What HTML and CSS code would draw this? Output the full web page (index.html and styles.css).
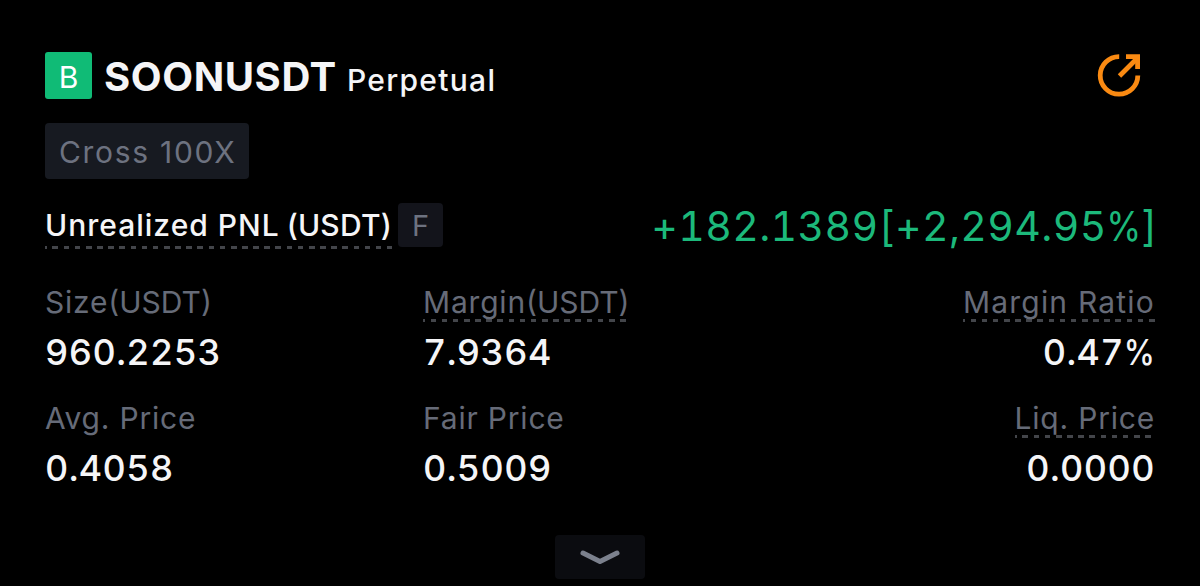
FILE: index.html
```html
<!DOCTYPE html>
<html lang="en">
<head>
    <meta charset="UTF-8">
    <meta name="viewport" content="width=device-width, initial-scale=1.0">
    <title>SOONUSDT Perpetual</title>
    <link rel="stylesheet" href="styles.css">
</head>
<body>
    <div class="position-card">
        <!-- Header -->
        <div class="card-header">
            <span class="side-badge">B</span>
            <h1 class="symbol">SOONUSDT</h1>
            <span class="contract-type">Perpetual</span>
            <svg class="share-icon" width="48" height="48" viewBox="0 0 48 48" fill="none" stroke="#fa8a12" stroke-width="4.8">
                <path d="M24.2 5.6A18.8 18.8 0 1 0 42.8 24.5"/>
                <path d="M24.5 25L42 7.5"/>
                <path d="M31 5.6H42.6V18"/>
            </svg>
        </div>

        <span class="leverage-tag">Cross 100X</span>

        <!-- PNL -->
        <div class="pnl-row">
            <span class="pnl-label dashed">Unrealized PNL <span class="unit">(USDT)</span></span>
            <span class="fair-badge">F</span>
            <span class="pnl-value">+182.1389[+2,294.95<span class="percent">%</span>]</span>
        </div>

        <!-- Position details -->
        <div class="stats">
            <div class="stat">
                <span class="stat-label">Size<span class="unit">(USDT)</span></span>
                <span class="stat-value">960.2253</span>
            </div>
            <div class="stat">
                <span class="stat-label dashed">Margin<span class="unit">(USDT)</span></span>
                <span class="stat-value">7.9364</span>
            </div>
            <div class="stat right">
                <span class="stat-label ratio dashed">Margin Ratio</span>
                <span class="stat-value">0.47<span class="percent">%</span></span>
            </div>
            <div class="stat">
                <span class="stat-label">Avg. Price</span>
                <span class="stat-value">0.4058</span>
            </div>
            <div class="stat">
                <span class="stat-label">Fair Price</span>
                <span class="stat-value">0.5009</span>
            </div>
            <div class="stat right">
                <span class="stat-label dashed">Liq. Price</span>
                <span class="stat-value">0.0000</span>
            </div>
        </div>

        <button class="expand-btn" aria-label="Expand">
            <svg width="42" height="18" viewBox="0 0 42 18" fill="none" stroke="#7c818d" stroke-width="5" stroke-linecap="round" stroke-linejoin="round">
                <path d="M4 5L21 13.5L38 5"/>
            </svg>
        </button>
    </div>
</body>
</html>
```

FILE: styles.css
```css
* {
    margin: 0;
    padding: 0;
    box-sizing: border-box;
}

body {
    font-family: Inter, sans-serif;
    background: #000;
    color: #f5f5f7;
}

.position-card {
    display: flex;
    flex-direction: column;
    align-items: flex-start;
    height: 586px;
    padding: 52px 45px 7px;
}

.card-header {
    display: flex;
    align-items: baseline;
    width: 100%;
    height: 47px;
}

.side-badge {
    width: 47px;
    height: 47px;
    border-radius: 3px;
    background: #10bb76;
    color: #fff;
    font-size: 30px;
    line-height: 50px;
    text-align: center;
    align-self: flex-start;
}

.symbol {
    margin-left: 12px;
    font-size: 40px;
    font-weight: 700;
    line-height: 50px;
    letter-spacing: 0.6px;
}

.contract-type {
    margin-left: 10px;
    font-size: 30px;
    font-weight: 500;
    letter-spacing: 1.3px;
}

.share-icon {
    margin: -1px 12px 0 auto;
    align-self: flex-start;
}

.leverage-tag {
    height: 56px;
    margin-top: 24px;
    padding: 0 13px 0 14px;
    border-radius: 4px;
    background: #171a21;
    color: #6d7280;
    font-size: 30px;
    line-height: 58px;
    letter-spacing: 1.7px;
}

.pnl-row {
    display: flex;
    align-items: center;
    width: 100%;
    height: 44px;
    margin-top: 24px;
}

/* underline made of short dashes */
.dashed {
    background: repeating-linear-gradient(90deg, #43454a 0 2px, transparent 2px 7.5px, #43454a 7.5px 11.15px) left bottom / 100% 3px no-repeat;
}

.pnl-label {
    height: 46px;
    margin-top: 2px;
    font-size: 30px;
    font-weight: 500;
    line-height: 44px;
    letter-spacing: 1px;
}

.pnl-label .unit {
    margin-left: -2px;
    letter-spacing: 0.2px;
}

.fair-badge {
    width: 45px;
    height: 44px;
    margin-left: 6px;
    border-radius: 4px;
    background: #13141b;
    color: #6d7280;
    font-size: 29px;
    line-height: 46px;
    text-align: center;
}

.pnl-value {
    margin: 2px -3px 0 auto;
    color: #1cb97b;
    font-size: 41px;
    font-variant-numeric: tabular-nums;
    line-height: 46px;
    letter-spacing: 0.4px;
}

.stats {
    display: grid;
    grid-template-columns: 378px 1fr auto;
    row-gap: 20px;
    width: 100%;
    margin-top: 36px;
}

.stat {
    display: flex;
    flex-direction: column;
    align-items: flex-start;
    height: 95.5px;
}

.stat.right {
    align-items: flex-end;
}

.stat-label {
    height: 39px;
    color: #666b78;
    font-size: 30px;
    line-height: 39px;
    letter-spacing: 0.8px;
}

.stat-label.ratio {
    letter-spacing: 1.2px;
}

.stat-label .unit {
    letter-spacing: 0;
}

.stat-value {
    margin-top: 6px;
    font-size: 36px;
    font-weight: 500;
    font-variant-numeric: tabular-nums;
    line-height: 48px;
    letter-spacing: 0.4px;
}

/* narrower percent sign */
.percent {
    display: inline-block;
    margin-left: -0.13em;
    letter-spacing: 0;
    transform: scaleX(0.87);
    transform-origin: right;
}

.expand-btn {
    display: flex;
    align-items: center;
    justify-content: center;
    width: 90px;
    height: 44px;
    margin: auto auto 0;
    border: none;
    border-radius: 4px;
    background: #0b0c10;
}
```
